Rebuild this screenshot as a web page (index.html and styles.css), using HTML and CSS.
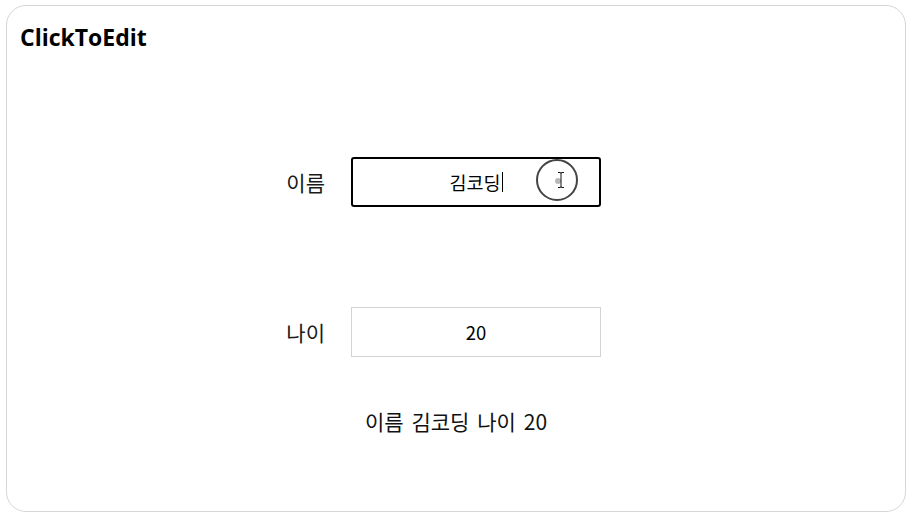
FILE: index.html
```html
<!DOCTYPE html>
<html lang="ko">
<head>
<meta charset="utf-8">
<link rel="stylesheet" href="styles.css">
</head>
<body>
<div class="card">
  <h1 class="title">ClickToEdit</h1>
  <div class="row row-first">
    <div class="label">이름</div>
    <div class="field field-active">
      <span class="value">김코딩</span><span class="caret"></span>
      <div class="touch">
        <span class="dot"></span>
        <svg class="ibeam" width="8" height="18" viewBox="0 0 8 18"><path d="M1 1.5h2.2M4.8 1.5H7M4 2v14M1 16.5h2.2M4.8 16.5H7M3.2 1.5q.8 0 .8 .8M4.8 1.5q-.8 0-.8 .8M3.2 16.5q.8 0 .8-.8M4.8 16.5q-.8 0-.8-.8" stroke="#111" stroke-width="1" fill="none"/></svg>
      </div>
    </div>
  </div>
  <div class="row row-second">
    <div class="label">나이</div>
    <div class="field"><span class="value">20</span></div>
  </div>
  <div class="summary">이름 김코딩 나이 20</div>
</div>
</body>
</html>
```
FILE: styles.css
```css
html, body {
  margin: 0;
  padding: 0;
  background: #fff;
}
body {
  font-family: "Noto Sans CJK KR", "Noto Sans", sans-serif;
  color: #111;
}
.card {
  margin: 5px 0 0 6px;
  width: 898px;
  height: 505px;
  border: 1px solid #d6d6d6;
  border-radius: 20px;
  display: flex;
  flex-direction: column;
}
.title {
  margin: 0;
  padding: 16px 0 0 13px;
  height: 30px;
  font-family: "Open Sans", "Noto Sans", sans-serif;
  font-weight: 700;
  font-size: 23px;
  line-height: 30px;
  color: #000;
}
.row {
  display: flex;
  align-items: center;
  padding-left: 238px;
  gap: 26px;
}
.row-first { margin-top: 105px; }
.row-second { margin-top: 100px; }
.label {
  width: 80px;
  text-align: right;
  font-size: 21px;
  line-height: 28px;
  color: #1a1a1a;
}
.field {
  position: relative;
  box-sizing: border-box;
  width: 250px;
  height: 50px;
  border: 1px solid #d3d3d3;
  display: flex;
  align-items: center;
  justify-content: center;
  font-size: 18.5px;
  color: #000;
}
.field-active {
  border: 2px solid #000;
  border-radius: 3px;
}
.value { line-height: 24px; }
.caret {
  display: inline-block;
  width: 1px;
  height: 20px;
  background: #000;
  margin-left: 1px;
}
.touch {
  position: absolute;
  left: 183px;
  top: 0px;
  width: 38px;
  height: 38px;
  border: 2px solid #444;
  border-radius: 50%;
}
.dot {
  position: absolute;
  left: 17px;
  top: 17px;
  width: 6px;
  height: 6px;
  border-radius: 50%;
  background: #b8b8b8;
}
.ibeam {
  position: absolute;
  left: 19px;
  top: 10px;
}
.summary {
  margin-top: 50px;
  text-align: center;
  font-size: 21px;
  line-height: 28px;
  word-spacing: 2px;
  color: #111;
}
```
